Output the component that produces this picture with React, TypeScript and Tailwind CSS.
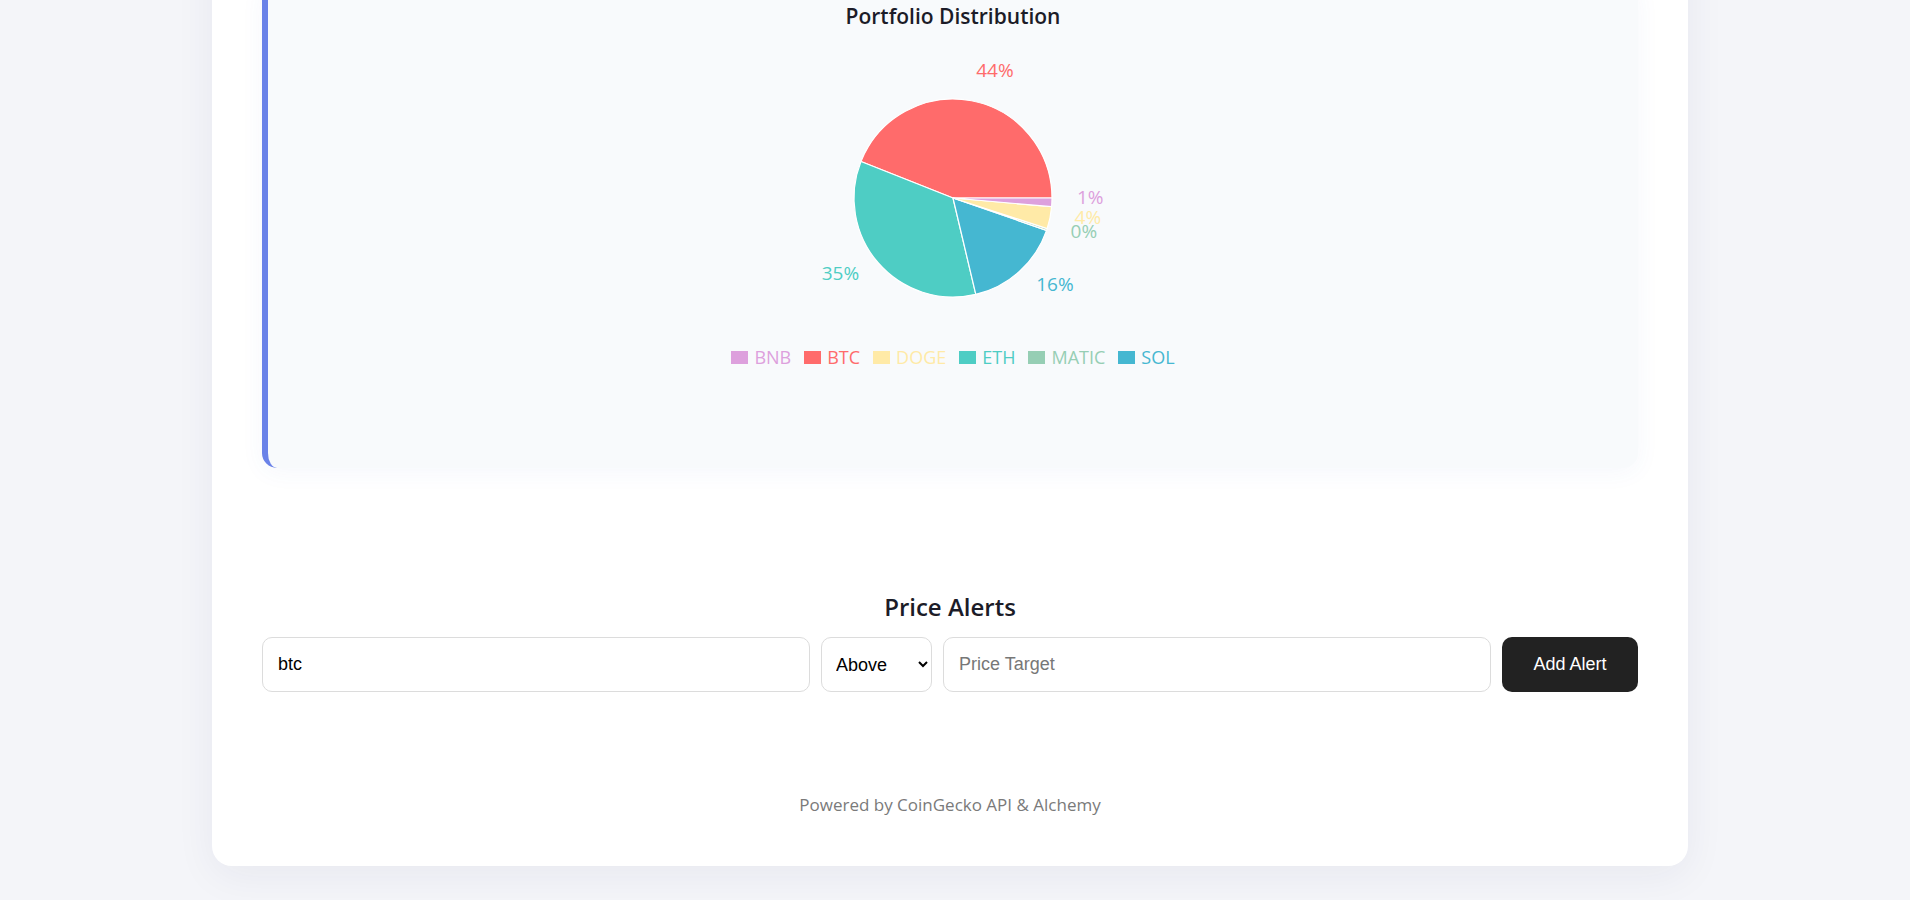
import { useEffect, useRef } from 'react';

type Slice = { name: string; value: number; color: string };

// order the slices are drawn in, counter-clockwise from 3 o'clock
const slices: Slice[] = [
    { name: 'BTC', value: 0.44, color: '#FF6B6B' },
    { name: 'ETH', value: 0.347, color: '#4ECDC4' },
    { name: 'SOL', value: 0.16, color: '#45B7D1' },
    { name: 'MATIC', value: 0.003, color: '#96CEB4' },
    { name: 'DOGE', value: 0.036, color: '#FFEAA7' },
    { name: 'BNB', value: 0.014, color: '#DDA0DD' },
];

const legend = ['BNB', 'BTC', 'DOGE', 'ETH', 'MATIC', 'SOL'].map(
    (n) => slices.find((s) => s.name === n)!
);

const CX = 685;
const CY = 168;
const R = 99;

function point(angle: number, r: number) {
    const rad = (angle * Math.PI) / 180;
    return [CX + r * Math.cos(rad), CY - r * Math.sin(rad)];
}

function PieChart() {
    let start = 0;
    const parts = slices.map((s) => {
        const sweep = s.value * 360;
        const end = start + sweep;
        const [x1, y1] = point(start, R);
        const [x2, y2] = point(end, R);
        const large = sweep > 180 ? 1 : 0;
        const d = `M${CX},${CY} L${x1},${y1} A${R},${R} 0 ${large} 0 ${x2},${y2} Z`;
        const mid = start + sweep / 2;
        const [lx, ly] = point(mid, R + 25);
        start = end;
        return { ...s, d, lx, ly, anchor: Math.cos((mid * Math.PI) / 180) >= 0 ? 'start' : 'end' };
    });

    return (
        <svg width="1370" height="310" viewBox="0 0 1370 310" className="block">
            {parts.map((p) => (
                <path key={p.name} d={p.d} fill={p.color} stroke="#fff" strokeWidth={1.2} />
            ))}
            {parts.map((p) => (
                <text
                    key={p.name + '-l'}
                    x={p.lx}
                    y={p.ly - 6}
                    fill={p.color}
                    textAnchor={p.anchor}
                    dominantBaseline="central"
                    fontSize="19"
                    fontFamily="'Open Sans', sans-serif"
                >
                    {Math.round(p.value * 100)}%
                </text>
            ))}
        </svg>
    );
}

export default function App() {
    const scroller = useRef<HTMLDivElement>(null);

    useEffect(() => {
        if (scroller.current) scroller.current.scrollTop = scroller.current.scrollHeight;
    }, []);

    return (
        <div
            ref={scroller}
            className="h-screen overflow-y-scroll bg-[#f4f5f9] pr-[10px] font-['Open_Sans',sans-serif]"
        >
            <div className="pt-10 pb-[34px]">
                <div className="mx-auto w-[1476px] rounded-[20px] bg-white px-[50px] pt-[50px] pb-[48px] shadow-[0_10px_40px_rgba(30,40,80,0.06)]">
                    <div className="rounded-[15px] border-l-[6px] border-[#6a82e8] bg-[#f8fafc] pt-[20px] pb-[94px] shadow-[0_4px_24px_rgba(60,100,200,0.05)]">
                        <h3 className="text-center text-[21px] leading-[28px] font-semibold text-[#1c1c28]">
                            Portfolio Distribution
                        </h3>
                        <PieChart />
                        <div className="flex h-[34px] items-center justify-center gap-[13px] text-[18px]">
                            {legend.map((l) => (
                                <div key={l.name} className="flex items-center gap-[6px]" style={{ color: l.color }}>
                                    <span className="inline-block h-[13px] w-[17px]" style={{ background: l.color }} />
                                    <span>{l.name}</span>
                                </div>
                            ))}
                        </div>
                    </div>

                    <h2 className="mt-[123px] text-center text-[24px] leading-[32px] font-semibold text-[#1c1c28]">
                        Price Alerts
                    </h2>
                    <div className="mt-[14px] flex h-[55px] gap-[11px] font-['Liberation_Sans',Arial,sans-serif] text-[18px]">
                        <input
                            defaultValue="btc"
                            className="min-w-0 flex-1 rounded-[10px] border border-[#dcdcdc] bg-white px-[15px] text-black outline-none"
                        />
                        <select
                            defaultValue="above"
                            className="w-[111px] rounded-[10px] border border-[#dcdcdc] bg-white px-[10px] text-black outline-none"
                        >
                            <option value="above">Above</option>
                            <option value="below">Below</option>
                        </select>
                        <input
                            placeholder="Price Target"
                            className="min-w-0 flex-1 rounded-[10px] border border-[#dcdcdc] bg-white px-[15px] text-black outline-none placeholder:text-[#777]"
                        />
                        <button className="w-[136px] rounded-[10px] bg-[#222222] text-white">Add Alert</button>
                    </div>

                    <p className="mt-[100px] text-center text-[17px] leading-[26px] text-[#7a7a7a]">
                        Powered by CoinGecko API &amp; Alchemy
                    </p>
                </div>
            </div>
        </div>
    );
}
